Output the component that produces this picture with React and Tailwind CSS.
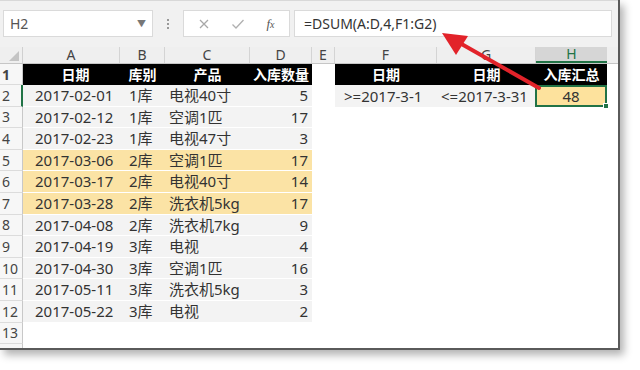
import React from 'react';

const data = [
  ['2017-02-01', '1库', '电视40寸', 5],
  ['2017-02-12', '1库', '空调1匹', 17],
  ['2017-02-23', '1库', '电视47寸', 3],
  ['2017-03-06', '2库', '空调1匹', 17],
  ['2017-03-17', '2库', '电视40寸', 14],
  ['2017-03-28', '2库', '洗衣机5kg', 17],
  ['2017-04-08', '2库', '洗衣机7kg', 9],
  ['2017-04-19', '3库', '电视', 4],
  ['2017-04-30', '3库', '空调1匹', 16],
  ['2017-05-11', '3库', '洗衣机5kg', 3],
  ['2017-05-22', '3库', '电视', 2],
];

const letters = [
  ['A', 'w-[97px]'],
  ['B', 'w-[45px]'],
  ['C', 'w-[85px]'],
  ['D', 'w-[62px]'],
  ['E', 'w-[23px]'],
  ['F', 'w-[102px]'],
  ['G', 'w-[99px]'],
];

const font = { fontFamily: '"Noto Sans", "Noto Sans CJK SC", sans-serif' };

const RowNum = ({ n, active }) => (
  <div
    className={`w-[23px] shrink-0 h-full flex items-center pl-[2px] text-[14px] text-[#444] bg-[#f7f7f7] border-b border-[#dcdcdc] ${
      active ? 'border-r-2 border-r-[#217346]' : 'border-r border-r-[#c8c8c8]'
    }`}
  >
    {n}
  </div>
);

const Arrow = () => (
  <svg className="absolute left-0 top-0 pointer-events-none" width="620" height="120">
    <line x1="539" y1="88" x2="458" y2="42" stroke="#e2232a" strokeWidth="4" strokeLinecap="round" />
    <polygon points="442,33 468,36 456,55" fill="#e2232a" />
  </svg>
);

export default function App() {
  return (
    <div className="w-[640px] h-[370px] bg-white" style={font}>
      <div className="relative w-[620px] h-[350px] bg-white border-r-2 border-b-2 border-[#5a5a5a] shadow-[4px_5px_8px_rgba(0,0,0,0.3)] overflow-hidden">
        {/* toolbar */}
        <div className="h-[47px] bg-[#f1f1f1] border-t border-[#d8d8d8] flex items-start pt-[9px] pl-[3px]">
          <div className="w-[150px] h-[27px] bg-white border border-[#dadada] flex items-center justify-between px-[6px]">
            <span className="text-[14px] text-[#555]">H2</span>
            <span className="text-[9px] text-[#777]">▼</span>
          </div>
          <div className="w-[30px] h-[27px] flex flex-col items-center justify-center gap-[2px]">
            <span className="w-[2px] h-[2px] bg-[#999]" />
            <span className="w-[2px] h-[2px] bg-[#999]" />
            <span className="w-[2px] h-[2px] bg-[#999]" />
          </div>
          <div className="w-[107px] h-[27px] bg-white border border-[#dadada] flex items-center justify-around px-[4px] text-[#9a9a9a]">
            <svg width="12" height="12" viewBox="0 0 12 12">
              <path d="M2 2 L10 10 M10 2 L2 10" stroke="#a8a8a8" strokeWidth="1.3" fill="none" />
            </svg>
            <svg width="14" height="12" viewBox="0 0 14 12">
              <path d="M1.5 6.5 L5 10 L12.5 2" stroke="#b0b0b0" strokeWidth="1.3" fill="none" />
            </svg>
            <span className="text-[13px] italic text-[#555]" style={{ fontFamily: '"Liberation Serif", serif' }}>
              f<span className="text-[10px]">x</span>
            </span>
          </div>
          <div className="ml-[4px] w-[318px] h-[27px] bg-white border border-[#dadada] flex items-center pl-[9px] text-[14px] text-[#333]">
            =DSUM(A:D,4,F1:G2)
          </div>
        </div>

        {/* column headers */}
        <div className="flex h-[17px] bg-[#efefef] border-b border-[#c6c6c6] text-[14px] text-[#444]">
          <div className="w-[23px] shrink-0 relative border-r border-[#d0d0d0]">
            <svg className="absolute right-[3px] bottom-[2px]" width="10" height="10">
              <polygon points="10,0 10,10 0,10" fill="#c4c4c4" />
            </svg>
          </div>
          {letters.map(([l, w]) => (
            <div key={l} className={`${w} shrink-0 flex items-center justify-center border-r border-[#d4d4d4] leading-none`}>
              {l}
            </div>
          ))}
          <div className="w-[71px] shrink-0 flex items-center justify-center bg-[#d6d6d6] text-[#217346] border-b-2 border-[#217346] leading-none">
            H
          </div>
          <div className="flex-1" />
        </div>

        {/* row 1 */}
        <div className="flex h-[21px] text-[14px] font-bold text-white">
          <RowNum n={1} />
          <div className="w-[97px] bg-black flex items-center justify-center pl-[8px]">日期</div>
          <div className="w-[45px] bg-black flex items-center justify-center">库别</div>
          <div className="w-[85px] bg-black flex items-center justify-center">产品</div>
          <div className="w-[62px] bg-black flex items-center justify-center">入库数量</div>
          <div className="w-[23px] bg-white" />
          <div className="w-[102px] bg-black flex items-center justify-center">日期</div>
          <div className="w-[99px] bg-black flex items-center justify-center">日期</div>
          <div className="w-[71px] bg-black flex items-center justify-center">入库汇总</div>
        </div>

        {/* data rows */}
        {data.map((r, i) => {
          const hi = i >= 3 && i <= 5;
          const bg = hi ? 'bg-[#fbe3a5]' : 'bg-[#f3f3f3]';
          return (
            <div key={i} className="flex h-[21.6px] text-[15px] text-[#333]">
              <RowNum n={i + 2} active={i === 0} />
              <div className={`w-[289px] flex items-center border-b border-white ${bg}`}>
                <div className="w-[97px] pl-[12px] whitespace-nowrap">{r[0]}</div>
                <div className="w-[45px] pl-[9px] whitespace-nowrap">{r[1]}</div>
                <div className="w-[85px] pl-[4px] whitespace-nowrap">{r[2]}</div>
                <div className="w-[62px] pr-[4px] text-right">{r[3]}</div>
              </div>
              <div className="w-[23px]" />
              {i === 0 && (
                <>
                  <div className="w-[102px] bg-[#f3f3f3] flex items-center pl-[9px] whitespace-nowrap">&gt;=2017-3-1</div>
                  <div className="w-[99px] bg-[#f3f3f3] flex items-center pl-[4px] whitespace-nowrap">&lt;=2017-3-31</div>
                  <div className="relative w-[72px] -ml-[1px] bg-[#fde29d] border-2 border-[#217346] flex items-center justify-center">
                    48
                    <span className="absolute -right-[4px] -bottom-[4px] w-[6px] h-[6px] bg-[#217346] border border-white" />
                  </div>
                </>
              )}
            </div>
          );
        })}

        {/* empty rows */}
        <div className="flex h-[21.6px]">
          <RowNum n={13} />
        </div>
        <div className="flex h-[21.6px]">
          <RowNum n="" />
        </div>

        <Arrow />
      </div>
    </div>
  );
}
